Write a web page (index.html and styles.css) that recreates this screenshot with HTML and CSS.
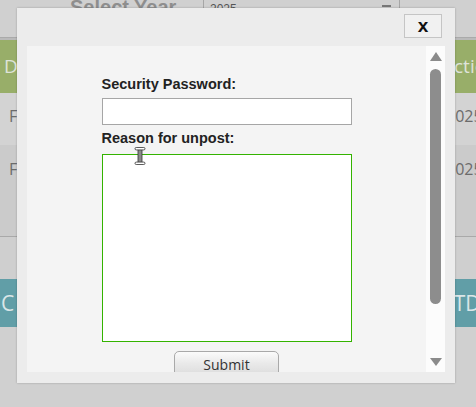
FILE: index.html
```html
<!DOCTYPE html>
<html lang="en">
<head>
    <meta charset="UTF-8">
    <meta name="viewport" content="width=device-width, initial-scale=1.0">
    <title>Unpost</title>
    <link rel="stylesheet" href="styles.css">
</head>
<body>
    <!-- page behind the dialog -->
    <div class="page">
        <div class="yearbar">
            <span class="year-label">Select Year</span>
            <div class="year-select">
                <span>2025</span>
                <i class="year-arrow"></i>
            </div>
        </div>
        <div class="rule"></div>
        <div class="row row-head">
            <span class="cell-left">D</span>
            <span class="cell-right">Action</span>
        </div>
        <div class="row row-one">
            <span class="cell-left">F</span>
            <span class="cell-right">2025</span>
        </div>
        <div class="row row-two">
            <span class="cell-left">F</span>
            <span class="cell-right">2025</span>
        </div>
        <div class="row row-gap"></div>
        <div class="row row-foot">
            <span class="cell-left">C</span>
            <span class="cell-right">YTD</span>
        </div>
    </div>

    <!-- dialog -->
    <div class="modal">
        <div class="modal-head">
            <button class="close-btn">x</button>
        </div>
        <div class="modal-body">
            <div class="modal-scroll">
                <div class="unpost-form">
                    <label for="securityPassword">Security Password:</label>
                    <input type="password" id="securityPassword">
                    <label for="reason">Reason for unpost:</label>
                    <textarea id="reason"></textarea>
                    <div class="submit-row">
                        <button class="submit-btn">Submit</button>
                    </div>
                </div>
            </div>
            <div class="scrollbar">
                <i class="arrow-up"></i>
                <div class="thumb"></div>
                <i class="arrow-down"></i>
            </div>
        </div>
    </div>

    <!-- text cursor over the textarea -->
    <svg class="ibeam" width="12" height="18" viewBox="0 0 12 18">
        <rect x="4" y="2" width="4" height="14" fill="#8a8a8a" stroke="#333" stroke-width="0.8"/>
        <rect x="1" y="0.5" width="10" height="2.4" rx="1.2" fill="#fff" stroke="#333" stroke-width="0.8"/>
        <rect x="1" y="15.1" width="10" height="2.4" rx="1.2" fill="#fff" stroke="#333" stroke-width="0.8"/>
    </svg>
</body>
</html>
```

FILE: styles.css
```css
body {
    margin: 0;
    padding: 0;
    background-color: #d0d0d0;
    font-family: "Liberation Sans", Arial, sans-serif;
    overflow: hidden;
}

/* background page */
.page {
    width: 476px;
    height: 407px;
    overflow: hidden;
}

.yearbar {
    display: flex;
    align-items: flex-start;
    height: 37px;
    padding-left: 70px;
    overflow: hidden;
}

.year-label {
    width: 133px;
    margin-top: -3px;
    font-size: 20px;
    line-height: 20px;
    font-weight: bold;
    color: #8e8e8e;
}

.year-select {
    display: flex;
    justify-content: space-between;
    width: 197px;
    height: 30px;
    margin-top: -16px;
    padding: 0 8px 0 6px;
    box-sizing: border-box;
    border-left: 1px solid #a6a6a6;
    border-right: 1px solid #a6a6a6;
    font-size: 12px;
    line-height: 12px;
    color: #555;
}

.year-select span {
    margin-top: 19px;
}

.year-arrow {
    width: 9px;
    height: 2px;
    margin-top: 21px;
    background-color: #777;
}

.rule {
    height: 3px;
    background-color: #bababa;
    border-top: 1px solid #aaa;
    box-sizing: border-box;
}

.row {
    display: grid;
    grid-template-columns: 1fr 34px;
    font-family: "Open Sans", sans-serif;
    white-space: nowrap;
    overflow: hidden;
}

.cell-right {
    overflow: hidden;
}

.row-head {
    height: 53px;
    background-color: #98ae69;
    color: #dfe3d9;
    font-size: 19px;
    line-height: 53px;
}

.row-head .cell-left {
    padding-left: 4px;
}

.row-one, .row-two {
    color: #6b6b6b;
    font-size: 16px;
    line-height: 22px;
}

.row-one {
    height: 52px;
    padding-top: 12px;
    box-sizing: border-box;
    background-color: #d3d3d3;
}

.row-two {
    height: 92px;
    padding-top: 13px;
    box-sizing: border-box;
    background-color: #cbcbcb;
    border-bottom: 1px solid #a9a9a9;
}

.row-one .cell-left, .row-two .cell-left {
    padding-left: 9px;
}

.row-one .cell-right, .row-two .cell-right {
    padding-left: 4px;
}

.row-gap {
    height: 42px;
    background-color: #cfcfcf;
}

.row-foot {
    height: 48px;
    background-color: #619ea7;
    color: #dbe6e8;
    font-size: 21px;
    line-height: 48px;
}

.row-foot .cell-left {
    padding-left: 1px;
}

/* dialog */
.modal {
    position: absolute;
    left: 17px;
    top: 8px;
    width: 438px;
    height: 375px;
    display: flex;
    flex-direction: column;
    padding: 0 10px 11px 10px;
    box-sizing: border-box;
    background-color: #ececec;
    box-shadow: 0 0 2px rgba(0, 0, 0, 0.25);
}

.modal-head {
    display: flex;
    justify-content: flex-end;
    height: 38px;
    padding: 6px 3px 0 0;
    box-sizing: border-box;
}

.close-btn {
    width: 38px;
    height: 24px;
    padding: 0;
    background-color: #f1f1f1;
    border: 1px solid #c5c5c5;
    font-family: "Liberation Sans", Arial, sans-serif;
    font-size: 19px;
    font-weight: bold;
    line-height: 18px;
    color: #111;
}

.modal-body {
    display: flex;
    flex: 1;
    overflow: hidden;
    background-color: #f4f4f4;
}

.modal-scroll {
    flex: 1;
    overflow: hidden;
    padding-top: 30px;
}

.unpost-form {
    width: 250px;
    margin: 0 auto;
}

label {
    display: block;
    font-size: 14.5px;
    line-height: 17px;
    font-weight: bold;
    color: #222;
}

input {
    display: block;
    width: 250px;
    height: 27px;
    margin: 5px 0 5px 0;
    box-sizing: border-box;
    background-color: #fff;
    border: 1px solid #a6a6a6;
}

textarea {
    display: block;
    width: 250px;
    height: 188px;
    margin: 7px 0 0 0;
    box-sizing: border-box;
    background-color: #fff;
    border: 1px solid #34b300;
    outline: none;
    resize: none;
}

.submit-row {
    text-align: center;
    margin-top: 9px;
}

.submit-btn {
    width: 105px;
    height: 28px;
    padding: 0 0 2px 0;
    background: linear-gradient(#fbfbfb, #e9e9e9 45%, #d9d9d9);
    border: 1px solid #a9a9a9;
    border-radius: 5px;
    font-family: "Open Sans", sans-serif;
    font-size: 14px;
    color: #333;
}

/* fake scrollbar */
.scrollbar {
    display: flex;
    flex-direction: column;
    align-items: center;
    width: 19px;
    padding: 6px 0 6px 0;
    box-sizing: border-box;
    background-color: #fcfcfc;
}

.arrow-up {
    width: 0;
    height: 0;
    border-left: 6px solid transparent;
    border-right: 6px solid transparent;
    border-bottom: 9px solid #8b8b8b;
}

.thumb {
    width: 11px;
    height: 235px;
    margin-top: 8px;
    border-radius: 6px;
    background-color: #8d8d8d;
}

.arrow-down {
    width: 0;
    height: 0;
    margin-top: auto;
    border-left: 6px solid transparent;
    border-right: 6px solid transparent;
    border-top: 8px solid #8b8b8b;
}

.ibeam {
    position: absolute;
    left: 134px;
    top: 147px;
}
```
